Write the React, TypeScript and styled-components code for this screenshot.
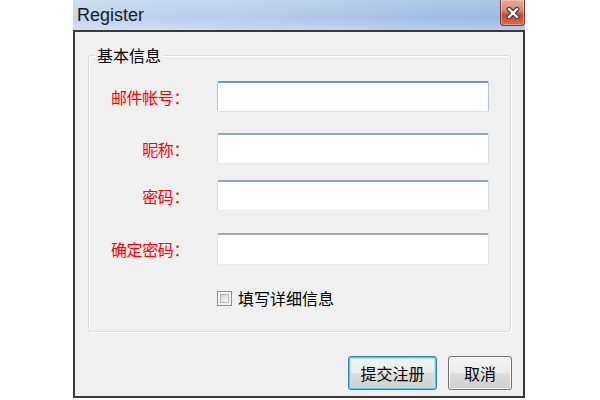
import React from "react";
import styled, { createGlobalStyle, css } from "styled-components";

const Global = createGlobalStyle`
  html, body { margin: 0; padding: 0; background: #ffffff; }
  body { font-family: "Noto Sans CJK SC", "Noto Sans", sans-serif; }
  * { box-sizing: border-box; }
`;

const Page = styled.div`
  width: 600px;
  height: 400px;
  padding-left: 73px;
  background: #ffffff;
  overflow: hidden;
`;

const Window = styled.div`
  width: 452px;
  height: 398px;
  display: flex;
  flex-direction: column;
`;

const TitleBar = styled.div`
  height: 30px;
  display: flex;
  align-items: flex-start;
  justify-content: space-between;
  background:
    linear-gradient(to bottom, rgba(255,255,255,0.18) 0%, rgba(255,255,255,0) 60%, rgba(255,255,255,0.25) 100%),
    linear-gradient(to right, #c3d5ee 0%, #b4cbea 45%, #a0bde4 80%, #9bb9e3 100%);
`;

const Title = styled.div`
  font-family: "Liberation Sans", Arial, sans-serif;
  font-size: 18px;
  line-height: 30px;
  color: #1b1b1b;
  padding-left: 4px;
`;

const CloseButton = styled.div`
  width: 25px;
  height: 26px;
  display: flex;
  align-items: center;
  justify-content: center;
  border: 1px solid #7c3b30;
  border-top: none;
  border-radius: 0 0 4px 4px;
  background: linear-gradient(to bottom, #e9a899 0%, #dd8a76 40%, #c84a31 60%, #d9684c 100%);
  box-shadow: inset 0 0 0 1px rgba(255, 220, 210, 0.45);
`;

const Client = styled.div`
  flex: 1;
  display: flex;
  flex-direction: column;
  background: #f0f0f0;
  border: 2px solid #3a3a3a;
  border-top-width: 2px;
`;

const Group = styled.fieldset`
  margin: 14px 12px 0 13px;
  padding: 0 0 24px 0;
  min-width: 0;
  border: 1px solid #d3dde4;
  border-radius: 3px;
  box-shadow: inset 1px 1px 0 #ffffff, 1px 1px 0 #ffffff;
`;

const Legend = styled.legend`
  margin-left: 6px;
  padding: 0 2px;
  font-size: 16px;
  line-height: 18px;
  color: #000000;
`;

const Row = styled.div<{ $top: number }>`
  display: flex;
  align-items: center;
  margin-top: ${(p) => p.$top}px;
`;

const Label = styled.div`
  width: 100px;
  text-align: right;
  font-size: 16px;
  line-height: 20px;
  color: #ff0000;
  margin-right: 28px;
  letter-spacing: -0.4px;
`;

const toneStyles = {
  focus: css`
    border-color: #6b9bc8 #aac8e4 #cfe0ef #aac8e4;
  `,
  normal: css`
    border-color: #8fa8be #d3dde7 #e0e7ee #d3dde7;
  `,
  dim: css`
    border-color: #a8a8a8 #e0e3e6 #e6e9ec #e0e3e6;
  `,
};

type Tone = keyof typeof toneStyles;

const Input = styled.input<{ $tone: Tone; $h: number }>`
  width: 272px;
  height: ${(p) => p.$h}px;
  border: 1px solid;
  border-top-width: 2px;
  border-radius: 2px;
  background: #ffffff;
  outline: none;
  padding: 0 4px;
  font-size: 15px;
  ${(p) => toneStyles[p.$tone]}
`;

const CheckRow = styled.label`
  display: flex;
  align-items: center;
  margin: 24px 0 0 128px;
  font-size: 16px;
  line-height: 18px;
  color: #000000;
`;

const CheckBox = styled.span`
  width: 15px;
  height: 15px;
  margin-right: 6px;
  border: 1px solid #8e8e8e;
  background: #f4f4f4;
  display: flex;
  padding: 2px;
`;

const CheckInner = styled.span`
  flex: 1;
  border: 1px solid #b9b9b9;
  background: linear-gradient(135deg, #cfcfcf 0%, #e8e8e8 50%, #fafafa 100%);
`;

const Buttons = styled.div`
  display: flex;
  justify-content: flex-end;
  gap: 11px;
  margin: 24px 11px 0 0;
`;

const Button = styled.button<{ $primary?: boolean; $w: number }>`
  width: ${(p) => p.$w}px;
  height: 34px;
  padding: 0;
  font-family: "Noto Sans CJK SC", "Noto Sans", sans-serif;
  font-size: 16px;
  color: #000000;
  border: 1px solid #707070;
  border-radius: 3px;
  background: linear-gradient(to bottom, #f3f3f3 0%, #ececec 48%, #dddddd 52%, #cfcfcf 100%);
  box-shadow: inset 0 0 0 1px #fcfcfc;
  ${(p) =>
    p.$primary &&
    css`
      border-color: #3c7fb1;
      box-shadow: inset 0 0 0 1px #48c8f5, inset 0 0 0 2px #b7e6fa;
    `}
`;

const CloseIcon = () => (
  <svg width="14" height="12" viewBox="0 0 14 12">
    <path d="M3 2 L11 10 M11 2 L3 10" stroke="#3c3c3c" strokeWidth="4.6" strokeLinecap="round" />
    <path d="M3 2 L11 10 M11 2 L3 10" stroke="#ffffff" strokeWidth="2.4" strokeLinecap="round" />
  </svg>
);

const rows: { label: string; top: number; tone: Tone; h: number }[] = [
  { label: "邮件帐号：", top: 17, tone: "focus", h: 31 },
  { label: "昵称：", top: 21, tone: "normal", h: 31 },
  { label: "密码：", top: 16, tone: "normal", h: 31 },
  { label: "确定密码：", top: 22, tone: "dim", h: 32 },
];

export default function App() {
  return (
    <>
      <Global />
      <Page>
        <Window>
          <TitleBar>
            <Title>Register</Title>
            <CloseButton>
              <CloseIcon />
            </CloseButton>
          </TitleBar>
          <Client>
            <Group>
              <Legend>基本信息</Legend>
              {rows.map((r) => (
                <Row key={r.label} $top={r.top}>
                  <Label>{r.label}</Label>
                  <Input $tone={r.tone} $h={r.h} />
                </Row>
              ))}
              <CheckRow>
                <CheckBox>
                  <CheckInner />
                </CheckBox>
                填写详细信息
              </CheckRow>
            </Group>
            <Buttons>
              <Button $primary $w={89}>提交注册</Button>
              <Button $w={64}>取消</Button>
            </Buttons>
          </Client>
        </Window>
      </Page>
    </>
  );
}
